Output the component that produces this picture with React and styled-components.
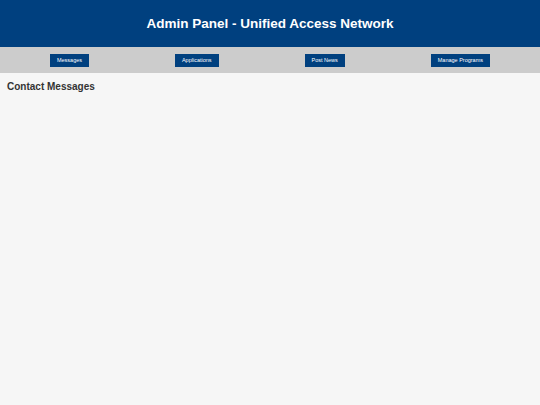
import React from "react";
import styled, { createGlobalStyle } from "styled-components";

const GlobalStyle = createGlobalStyle`
  html, body {
    margin: 0;
    padding: 0;
    background: #f6f6f6;
    font-family: "Liberation Sans", Arial, sans-serif;
  }
`

const Header = styled.header`
  background: #00407f;
  color: #fff;
  height: 47px;
  display: flex;
  align-items: center;
  justify-content: center;
`

const Title = styled.h1`
  margin: 0;
  font-size: 13.5px;
  font-weight: bold;
`

const Nav = styled.nav`
  background: #cccccc;
  height: 26px;
  padding: 0 7px;
  display: flex;
  align-items: center;
  justify-content: space-around;
`

const NavButton = styled.button`
  background: #00407f;
  color: #fff;
  border: none;
  height: 13px;
  padding: 0 7px;
  font-family: "Liberation Sans", Arial, sans-serif;
  font-size: 5.5px;
  cursor: pointer;
`

const Main = styled.main`
  padding: 8px 7px;
`

const Heading = styled.h2`
  margin: 0;
  font-size: 10px;
  font-weight: bold;
  color: #333;
`

const links = ["Messages", "Applications", "Post News", "Manage Programs"]

const App = () => {
    return (
        <>
            <GlobalStyle />
            <Header>
                <Title>Admin Panel - Unified Access Network</Title>
            </Header>
            <Nav>
                {links.map((l) => (
                    <NavButton key={l}>{l}</NavButton>
                ))}
            </Nav>
            <Main>
                <Heading>Contact Messages</Heading>
            </Main>
        </>
    )
}

export default App;
